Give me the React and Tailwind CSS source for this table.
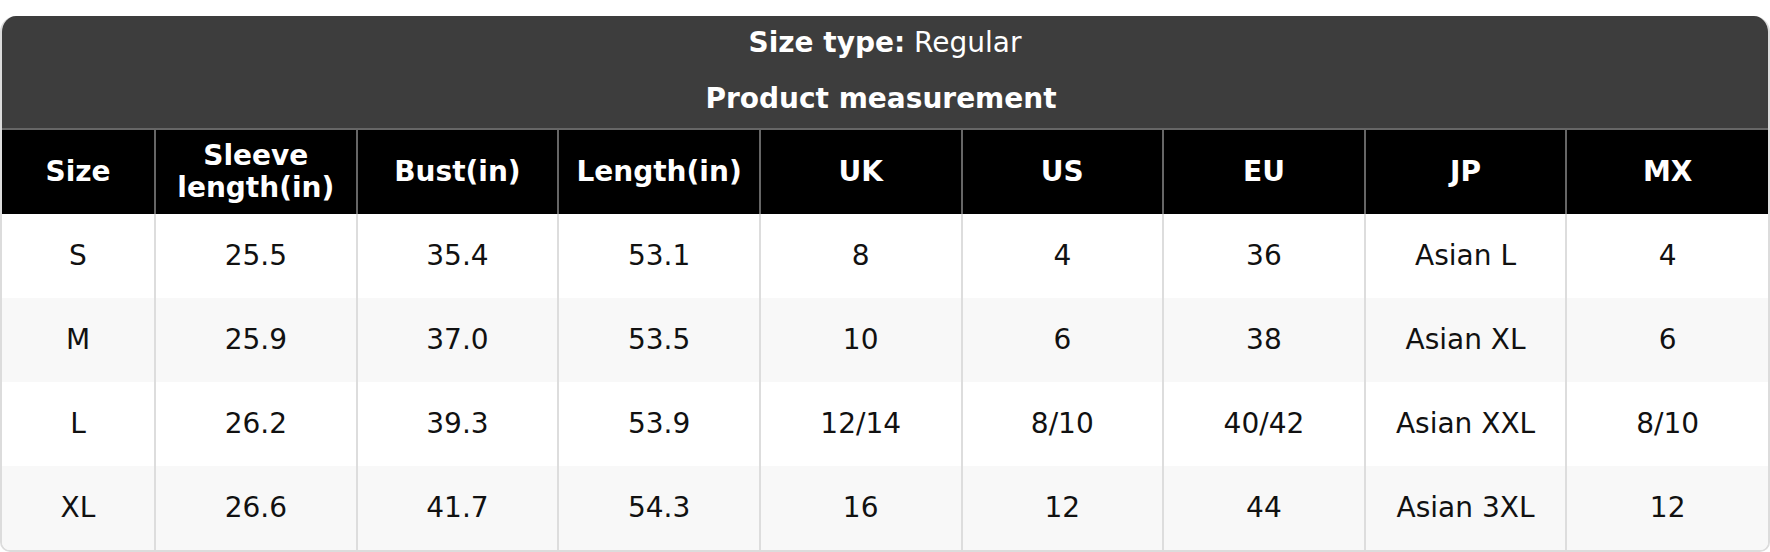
import React from 'react'

const columns = ['Size', 'Sleeve length(in)', 'Bust(in)', 'Length(in)', 'UK', 'US', 'EU', 'JP', 'MX']

const rows = [
  ['S', '25.5', '35.4', '53.1', '8', '4', '36', 'Asian L', '4'],
  ['M', '25.9', '37.0', '53.5', '10', '6', '38', 'Asian XL', '6'],
  ['L', '26.2', '39.3', '53.9', '12/14', '8/10', '40/42', 'Asian XXL', '8/10'],
  ['XL', '26.6', '41.7', '54.3', '16', '12', '44', 'Asian 3XL', '12'],
]

function SizeChart() {
  return (
    <div className="overflow-hidden rounded-t-[16px] rounded-b-[10px] border-x-2 border-b-2 border-[#dcdcdc] bg-white">
      {/* title block */}
      <div className="flex flex-col items-center bg-[#3d3d3d] pt-[10px] pb-[12px] text-[28px] leading-[34px] text-white">
        <div className="h-[34px]">
          <span className="font-bold">Size type:</span> Regular
        </div>
        <div className="mt-[22px] mr-[8px] h-[34px] font-bold">Product measurement</div>
      </div>

      <table className="w-full table-fixed border-collapse text-center text-[28px]">
        <colgroup>
          <col className="w-[153px]" />
          {columns.slice(1).map((c) => (
            <col key={c} />
          ))}
        </colgroup>
        <thead>
          <tr className="h-[85px] border-t-2 border-[#666] bg-black text-white">
            {columns.map((c, i) => (
              <th
                key={c}
                className={`px-2 font-bold leading-[32px] ${
                  i > 0 ? 'border-l-2 border-[#666]' : ''
                }`}
              >
                {c}
              </th>
            ))}
          </tr>
        </thead>
        <tbody className="text-[#111]">
          {rows.map((r, ri) => (
            <tr key={r[0]} className={`h-[84px] ${ri % 2 === 1 ? 'bg-[#f8f8f8]' : 'bg-white'}`}>
              {r.map((v, i) => (
                <td
                  key={i}
                  className={`px-2 leading-[34px] ${i > 0 ? 'border-l-2 border-[#dddddd]' : ''}`}
                >
                  {v}
                </td>
              ))}
            </tr>
          ))}
        </tbody>
      </table>
    </div>
  )
}

export default function App() {
  return (
    <div
      className="w-[1770px] bg-white pt-[16px]"
      style={{ fontFamily: '"DejaVu Sans", Verdana, sans-serif' }}
    >
      <SizeChart />
    </div>
  )
}
